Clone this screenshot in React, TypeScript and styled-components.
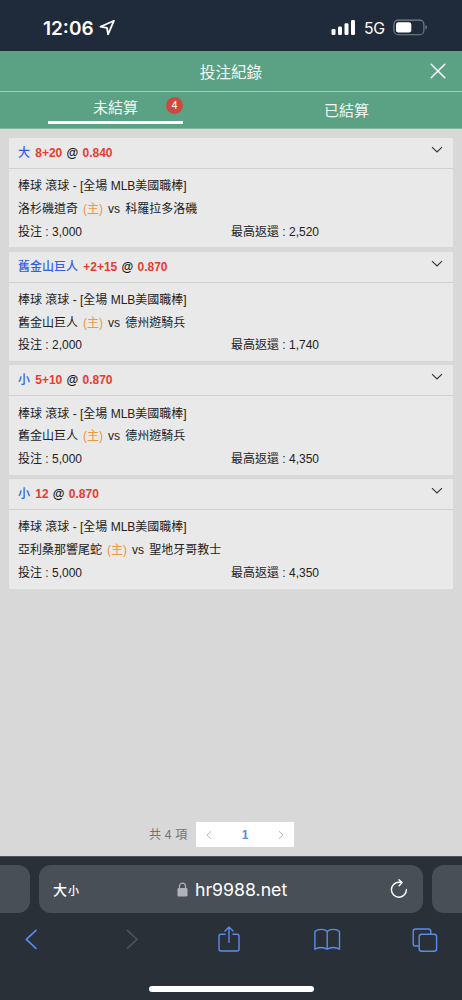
import React from "react";
import styled, { createGlobalStyle } from "styled-components";

const GlobalStyle = createGlobalStyle`
  * { box-sizing: border-box; }
  body { margin: 0; background: #d8d8d8; }
`;

const Screen = styled.div`
  width: 462px;
  height: 1000px;
  display: flex;
  flex-direction: column;
  overflow: hidden;
  background: #d8d8d8;
  color: #222;
  font-family: "Liberation Sans", "Noto Sans CJK TC", sans-serif;
  white-space: nowrap;
`;

const StatusBar = styled.header`
  flex: none;
  height: 51px;
  padding: 3px 34px 0 43px;
  display: flex;
  align-items: center;
  background: #1f2a3b;
  color: #fff;
  font-family: Inter, sans-serif;
`;
const Clock = styled.span`
  width: 52px;
  margin-top: 2px;
  font-size: 19px;
  font-weight: 600;
`;
const LocationIcon = styled.svg`
  margin-left: 4px;
`;
const SignalIcon = styled.svg`
  margin-left: auto;
`;
const Network = styled.span`
  margin: 2px 8px 0 8px;
  width: 21px;
  font-size: 15.8px;
  letter-spacing: -0.3px;
`;

const TitleBar = styled.div`
  flex: none;
  height: 41px;
  padding: 0 16px;
  display: grid;
  grid-template-columns: 16px 1fr 16px;
  align-items: center;
  background: #5ba284;
  border-bottom: 1px solid #a5cbb9;
  color: #f4f9f6;
`;
const Title = styled.h1`
  margin: 3px 0 0;
  text-align: center;
  font-size: 15.6px;
  line-height: 24px;
  font-weight: 400;
`;
const Tabs = styled.nav`
  flex: none;
  height: 37px;
  display: grid;
  grid-template-columns: 1fr 1fr;
  background: #5ba284;
  border-bottom: 1px solid #82b79e;
  color: #eff7f3;
`;
const Tab = styled.div<{ $active?: boolean }>`
  position: relative;
  width: 135px;
  height: 32px;
  margin-left: 48px;
  border-bottom: ${(p) => (p.$active ? "3px solid #fff" : "0")};
  padding-top: ${(p) => (p.$active ? "4px" : "7px")};
  text-align: center;
  font-size: 15px;
  line-height: 24px;
`;
const Badge = styled.span`
  position: absolute;
  top: 5px;
  right: 0;
  width: 17px;
  height: 17px;
  border-radius: 50%;
  background: #c94b42;
  color: #fff;
  font-family: Inter, sans-serif;
  font-size: 10px;
  line-height: 17px;
`;

const BetList = styled.main`
  flex: 1;
  padding: 8.8px 9px 0;
  display: flex;
  flex-direction: column;
  gap: 4.4px;
`;
const Card = styled.article`
  height: 109.4px;
  background: #e9e9e9;
  font-size: 12px;
`;
const CardHead = styled.div`
  height: 31px;
  padding: 0 10px 0 9px;
  display: flex;
  justify-content: space-between;
  border-bottom: 1px solid #d0d0d0;
`;
const Selection = styled.span`
  font-weight: 700;
  line-height: 31.4px;
  word-spacing: 0.9px;
  color: #ea3a30;
`;
const Pick = styled.span`
  margin-right: 1px;
  color: #2f5fe8;
  font-weight: 500;
`;
const At = styled.span`
  color: #111;
`;
const Chevron = styled.svg`
  margin-top: 8px;
`;
const CardBody = styled.div`
  padding: 6.2px 9px 4.4px;
`;
const Line = styled.div`
  display: flex;
  height: 22.8px;
  line-height: 22.8px;
`;
const Cell = styled.span`
  width: 213px;
`;
const Text = styled.span`
  white-space: pre;
  word-spacing: 1.7px;
`;
const Home = styled.span`
  color: #ef9744;
`;

const Pager = styled.footer`
  flex: none;
  height: 34px;
  padding-left: 149px;
  display: flex;
`;
const Total = styled.span`
  width: 47px;
  font-size: 12px;
  line-height: 26px;
  letter-spacing: 0.2px;
  color: #707276;
`;
const PageBox = styled.div`
  width: 98px;
  height: 25px;
  padding: 0 8px;
  display: grid;
  grid-template-columns: 10px 1fr 10px;
  align-items: center;
  background: #fff;
  color: #4a91e6;
  font-size: 12px;
  font-weight: 700;
  text-align: center;
`;

const Browser = styled.footer`
  flex: none;
  height: 144px;
  display: flex;
  flex-direction: column;
  background: #293038;
  border-top: 1px solid #4f555b;
`;
const AddressRow = styled.div`
  height: 56px;
  padding-top: 8px;
  display: grid;
  grid-template-columns: 30px 384px 30px;
  gap: 9px;
`;
const SideTab = styled.div<{ $left?: boolean }>`
  height: 48px;
  background: #494f57;
  border-radius: ${(p) => (p.$left ? "0 12px 12px 0" : "12px 0 0 12px")};
`;
const AddressBar = styled.div`
  height: 48px;
  padding: 0 15px 0 14px;
  display: grid;
  grid-template-columns: 124px 1fr auto;
  align-items: center;
  background: #494f57;
  border-radius: 12px;
  color: #fff;
`;
const TextSize = styled.span`
  font-family: "Noto Sans CJK TC", sans-serif;
  font-size: 14px;
  font-weight: 500;
  line-height: 24px;
`;
const Small = styled.span`
  margin-left: 1px;
  font-size: 11px;
`;
const Site = styled.span`
  display: flex;
  align-items: center;
  gap: 7px;
  font-family: Inter, sans-serif;
  font-size: 17.7px;
`;
const Toolbar = styled.div`
  height: 54px;
  padding-left: 23px;
  display: grid;
  grid-template-columns: 102px 92px 96px 99px auto;
  align-items: center;
`;
const HomeIndicator = styled.div`
  width: 165px;
  height: 6px;
  margin: 19px auto 0;
  border-radius: 3px;
  background: #fff;
`;

const bets = [
  { pick: "大", line: "8+20", odds: "0.840", home: "洛杉磯道奇", away: "科羅拉多洛磯", stake: "3,000", payout: "2,520" },
  { pick: "舊金山巨人", line: "+2+15", odds: "0.870", home: "舊金山巨人", away: "德州遊騎兵", stake: "2,000", payout: "1,740" },
  { pick: "小", line: "5+10", odds: "0.870", home: "舊金山巨人", away: "德州遊騎兵", stake: "5,000", payout: "4,350" },
  { pick: "小", line: "12", odds: "0.870", home: "亞利桑那響尾蛇", away: "聖地牙哥教士", stake: "5,000", payout: "4,350" },
];

export default function App() {
  return (
    <Screen>
      <GlobalStyle />
      <StatusBar>
        <Clock>12:06</Clock>
        <LocationIcon width="17" height="17" viewBox="0 0 17 17" fill="none" stroke="#fff" strokeWidth="1.8" strokeLinejoin="round">
          <path d="M15 1.7 L1.4 7.7 L8 8.8 L9 15.4 Z" />
        </LocationIcon>
        <SignalIcon width="25" height="17" viewBox="0 0 25 17" fill="#fff">
          <rect x="0.5" y="10" width="4" height="6" rx="1.2" />
          <rect x="7" y="7.5" width="4" height="8.5" rx="1.2" />
          <rect x="13.5" y="4.3" width="4" height="11.7" rx="1.2" />
          <rect x="20" y="1" width="4" height="15" rx="1.2" />
        </SignalIcon>
        <Network>5G</Network>
        <svg width="35" height="17" viewBox="0 0 35 17" fill="none">
          <rect x="0.9" y="1.1" width="30" height="14.6" rx="4.3" stroke="#7b828d" strokeWidth="1.1" />
          <rect x="3" y="3.2" width="15.3" height="10.4" rx="2.4" fill="#fff" />
          <path d="M32.5 6 C34.4 6.9 34.4 9.9 32.5 10.8 Z" fill="#7b828d" />
        </svg>
      </StatusBar>

      <TitleBar>
        <span />
        <Title>投注紀錄</Title>
        <svg width="16" height="16" viewBox="0 0 16 16" stroke="#fff" strokeWidth="1.5" strokeLinecap="round">
          <path d="M1.2 1.2 L14.8 14.8 M14.8 1.2 L1.2 14.8" />
        </svg>
      </TitleBar>
      <Tabs>
        <Tab $active>
          未結算<Badge>4</Badge>
        </Tab>
        <Tab>已結算</Tab>
      </Tabs>

      <BetList>
        {bets.map((b, i) => (
          <Card key={i}>
            <CardHead>
              <Selection>
                <Pick>{b.pick}</Pick> {b.line} <At>@</At> {b.odds}
              </Selection>
              <Chevron width="12" height="8" viewBox="0 0 12 8" fill="none" stroke="#333" strokeWidth="1.1">
                <path d="M1 1.2 L6 6 L11 1.2" />
              </Chevron>
            </CardHead>
            <CardBody>
              <Line>棒球 滾球 - [全場 MLB美國職棒]</Line>
              <Line>
                <Text>
                  {b.home} <Home>(主)</Home> vs {b.away}
                </Text>
              </Line>
              <Line>
                <Cell>投注 : {b.stake}</Cell>
                <span>最高返還 : {b.payout}</span>
              </Line>
            </CardBody>
          </Card>
        ))}
      </BetList>

      <Pager>
        <Total>共 4 項</Total>
        <PageBox>
          <svg width="10" height="10" viewBox="0 0 10 10" fill="none" stroke="#b9bbc0">
            <path d="M7 1.2 L3 5 L7 8.8" />
          </svg>
          <span>1</span>
          <svg width="10" height="10" viewBox="0 0 10 10" fill="none" stroke="#b9bbc0">
            <path d="M3 1.2 L7 5 L3 8.8" />
          </svg>
        </PageBox>
      </Pager>

      <Browser>
        <AddressRow>
          <SideTab $left />
          <AddressBar>
            <TextSize>
              大<Small>小</Small>
            </TextSize>
            <Site>
              <svg width="11" height="15" viewBox="0 0 11 15" fill="none">
                <rect x="0.5" y="6" width="10" height="8.5" rx="1.3" fill="#b0b2bb" />
                <path d="M2.5 7 V4.2 C2.5 0.2 8.5 0.2 8.5 4.2 V7" stroke="#b0b2bb" strokeWidth="1.2" />
              </svg>
              hr9988.net
            </Site>
            <svg width="18" height="20" viewBox="0 0 18 20" fill="none" stroke="#fff" strokeWidth="1.4" strokeLinecap="round" strokeLinejoin="round">
              <path d="M16.4 10.4 A7.5 7.5 0 1 1 8.9 3.2 L12 3.4 M9 0.8 L12 3.6 L9.2 6.8" />
            </svg>
          </AddressBar>
          <SideTab />
        </AddressRow>
        <Toolbar>
          <svg width="15" height="22" viewBox="0 0 15 22" fill="none" stroke="#5a8cee" strokeWidth="1.6" strokeLinecap="round" strokeLinejoin="round">
            <path d="M13 1.4 L3.3 10.4 L13 19.4" />
          </svg>
          <svg width="15" height="22" viewBox="0 0 15 22" fill="none" stroke="#4c525b" strokeWidth="1.6" strokeLinecap="round" strokeLinejoin="round">
            <path d="M2.3 1.4 L12 10.4 L2.3 19.4" />
          </svg>
          <svg width="24" height="28" viewBox="0 0 24 28" fill="none" stroke="#5a8cee" strokeWidth="1.4" strokeLinecap="round" strokeLinejoin="round">
            <path d="M8 8.2 H4 Q2 8.2 2 10.2 V23 Q2 25 4 25 H20 Q22 25 22 23 V10.2 Q22 8.2 20 8.2 H16 M12 16.2 V1 M8 5 L12 1 L16 5" />
          </svg>
          <svg width="28" height="24" viewBox="0 0 28 24" fill="none" stroke="#5a8cee" strokeWidth="1.4" strokeLinejoin="round">
            <path d="M14.2 3.5 C11.7 0.7 4.9 0.7 1.9 3.5 V21.2 C5.2 19 10.7 19 14.2 21.2 C17.7 19 23 19 26.5 21.2 V3.5 C23.5 0.7 16.7 0.7 14.2 3.5 Z M14.2 3.5 V21.2" />
          </svg>
          <svg width="26" height="25" viewBox="0 0 26 25" fill="none" stroke="#5a8cee" strokeWidth="1.4" strokeLinejoin="round">
            <rect x="7.2" y="6.3" width="17.4" height="17" rx="2.5" />
            <path d="M7.2 18 H3.5 Q1.2 18 1.2 15.7 V3.3 Q1.2 1 3.5 1 H16.5 Q18.8 1 18.8 3.3 V6.3" />
          </svg>
        </Toolbar>
        <HomeIndicator />
      </Browser>
    </Screen>
  );
}
